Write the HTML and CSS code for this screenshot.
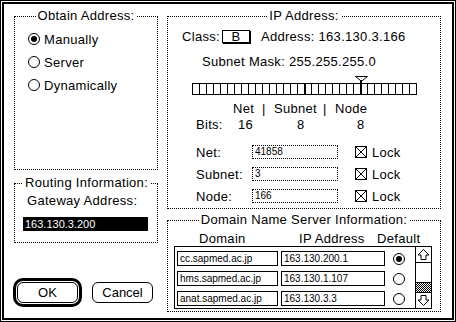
FILE: index.html
```html
<!DOCTYPE html>
<html lang="en">
<head>
	<meta charset="UTF-8">
	<title>MacTCP</title>
	<link rel="stylesheet" href="styles.css">
</head>
<body>
	<div class="dialog">
		<div class="frame">
			<div class="col-left">
				<div class="group obtain">
					<div class="group-title">Obtain Address:</div>
					<div class="radio"><span class="dot on"></span>Manually</div>
					<div class="radio"><span class="dot"></span>Server</div>
					<div class="radio"><span class="dot"></span>Dynamically</div>
				</div>

				<div class="group routing">
					<div class="group-title left">Routing Information:</div>
					<div class="gw-label">Gateway Address:</div>
					<div class="gw-field">163.130.3.200</div>
				</div>

				<div class="buttons">
					<div class="ok-ring"><button class="btn" type="button">OK</button></div>
					<button class="btn cancel" type="button">Cancel</button>
				</div>
			</div>

			<div class="col-right">
				<div class="group ip">
					<div class="group-title">IP Address:</div>
					<div class="class-row">
						<span>Class:</span>
						<span class="class-box">B</span>
						<span class="address">Address: 163.130.3.166</span>
					</div>
					<div class="mask">Subnet Mask: 255.255.255.0</div>

					<svg class="bitbar" width="226" height="20" viewBox="0 0 226 20">
						<rect x="0.5" y="7.5" width="224" height="11" fill="#fff" stroke="#000"/>
						<path d="M7.5 8v10M14.5 8v10M21.5 8v10M28.5 8v10M35.5 8v10M42.5 8v10M49.5 8v10M56.5 8v10M63.5 8v10M70.5 8v10M77.5 8v10M84.5 8v10M91.5 8v10M98.5 8v10M105.5 8v10M119.5 8v10M126.5 8v10M133.5 8v10M140.5 8v10M147.5 8v10M154.5 8v10M161.5 8v10M175.5 8v10M182.5 8v10M189.5 8v10M196.5 8v10M203.5 8v10M210.5 8v10M217.5 8v10" stroke="#000"/>
						<rect x="112" y="8" width="2" height="10" fill="#000"/>
						<rect x="168" y="4" width="2" height="14" fill="#000"/>
						<path d="M163.5 0.5h12l-5 4h-2z" fill="#fff" stroke="#000"/>
					</svg>

					<div class="bit-legend">
						<span class="lg-net">Net</span><span class="lg-bar">|</span><span class="lg-sub">Subnet</span><span class="lg-bar">|</span><span>Node</span>
					</div>
					<div class="bits">
						<span class="b-label">Bits:</span><span class="b-net">16</span><span class="b-sub">8</span><span>8</span>
					</div>

					<div class="field-row first">
						<span class="f-label">Net:</span>
						<span class="field">41858</span>
						<svg class="check" width="12" height="12" viewBox="0 0 12 12"><rect x="0.5" y="0.5" width="11" height="11" fill="#fff" stroke="#000"/><path d="M1 1l10 10M11 1L1 11" stroke="#000"/></svg>
						<span class="lock">Lock</span>
					</div>
					<div class="field-row">
						<span class="f-label">Subnet:</span>
						<span class="field">3</span>
						<svg class="check" width="12" height="12" viewBox="0 0 12 12"><rect x="0.5" y="0.5" width="11" height="11" fill="#fff" stroke="#000"/><path d="M1 1l10 10M11 1L1 11" stroke="#000"/></svg>
						<span class="lock">Lock</span>
					</div>
					<div class="field-row">
						<span class="f-label">Node:</span>
						<span class="field">166</span>
						<svg class="check" width="12" height="12" viewBox="0 0 12 12"><rect x="0.5" y="0.5" width="11" height="11" fill="#fff" stroke="#000"/><path d="M1 1l10 10M11 1L1 11" stroke="#000"/></svg>
						<span class="lock">Lock</span>
					</div>
				</div>

				<div class="group dns">
					<div class="group-title">Domain Name Server Information:</div>
					<div class="dns-head">
						<span class="h-domain">Domain</span><span class="h-ip">IP Address</span><span>Default</span>
					</div>
					<div class="dns-list">
						<div class="dns-rows">
							<div class="dns-row">
								<span class="cell domain">cc.sapmed.ac.jp</span>
								<span class="cell ipaddr">163.130.200.1</span>
								<span class="dot on"></span>
							</div>
							<div class="dns-row">
								<span class="cell domain">hms.sapmed.ac.jp</span>
								<span class="cell ipaddr">163.130.1.107</span>
								<span class="dot"></span>
							</div>
							<div class="dns-row">
								<span class="cell domain">anat.sapmed.ac.jp</span>
								<span class="cell ipaddr">163.130.3.3</span>
								<span class="dot"></span>
							</div>
						</div>
						<div class="scrollbar">
							<div class="arrow up">
								<svg width="15" height="15" viewBox="0 0 15 15"><path d="M7.5 2.5l5.5 5.5h-3v4.5h-5v-4.5h-3z" fill="#fff" stroke="#000"/></svg>
							</div>
							<div class="thumb"></div>
							<div class="track"></div>
							<div class="arrow down">
								<svg width="15" height="15" viewBox="0 0 15 15"><path d="M7.5 12.5l5.5 -5.5h-3v-4.5h-5v4.5h-3z" fill="#fff" stroke="#000"/></svg>
							</div>
						</div>
					</div>
				</div>
			</div>
		</div>
	</div>
</body>
</html>
```

FILE: styles.css
```css
* {
	box-sizing: border-box;
}

body {
	margin: 0;
	background-color: #ffffff;
	color: #000000;
	font-family: "Liberation Sans", Arial, sans-serif;
	font-size: 13px;
	letter-spacing: 0.3px;
}

.dialog {
	width: 456px;
	height: 322px;
	border: 1px solid #000;
	padding: 1px;
}

.frame {
	height: 100%;
	border: 2px solid #000;
	display: flex;
	gap: 9px;
	padding: 12px 0 0 10px;
}

.col-left {
	width: 144px;
}

.col-right {
	width: 274px;
}

.group {
	border: 1px dotted #000;
}

.group-title {
	display: table;
	margin: -9px auto 0;
	padding: 0 2px;
	background-color: #fff;
	line-height: 16px;
}

.group-title.left {
	margin-left: 8px;
}

/* obtain address */
.obtain {
	height: 154px;
}

.radio {
	display: flex;
	align-items: center;
	gap: 4px;
	height: 16px;
	margin: 7px 0 0 13px;
}

.obtain .radio:first-of-type {
	margin-top: 6px;
}

.dot {
	width: 12px;
	height: 12px;
	border: 1px solid #000;
	border-radius: 50%;
	display: flex;
	align-items: center;
	justify-content: center;
	flex: none;
}

.dot.on::after {
	content: "";
	width: 6px;
	height: 6px;
	border-radius: 50%;
	background-color: #000;
}

/* routing */
.routing {
	height: 60px;
	margin-top: 13px;
}

.gw-label {
	line-height: 16px;
	margin: 2px 0 0 12px;
}

.gw-field {
	width: 125px;
	height: 14px;
	margin: 8px 0 0 8px;
	padding-left: 2px;
	background-color: #000;
	color: #fff;
	font-size: 11px;
	line-height: 14px;
	letter-spacing: 0;
}

/* buttons */
.buttons {
	display: flex;
	align-items: flex-start;
	margin: 35px 0 0 -1px;
}

.ok-ring {
	border: 3px solid #000;
	border-radius: 10px;
	padding: 1px;
}

.btn {
	display: block;
	width: 61px;
	height: 21px;
	border: 1px solid #000;
	border-radius: 6px;
	background-color: #fff;
	color: #000;
	font: inherit;
	padding: 0;
}

.btn.cancel {
	margin: 4px 0 0 10px;
}

/* ip address */
.ip {
	height: 193px;
}

.class-row {
	display: flex;
	align-items: center;
	height: 16px;
	margin: 4px 0 0 14px;
}

.class-box {
	width: 28px;
	height: 13px;
	margin-left: 2px;
	border: 1px solid #000;
	box-shadow: 1px 1px 0 #000;
	text-align: center;
	line-height: 11px;
}

.address {
	margin-left: 11px;
}

.mask {
	line-height: 16px;
	margin: 10px 0 0 34px;
}

.bitbar {
	display: block;
	margin: 6px 0 0 24px;
}

.bit-legend {
	display: flex;
	line-height: 16px;
	margin: 5px 0 0 65px;
}

.lg-net {
	width: 29px;
}

.lg-bar {
	width: 12px;
}

.lg-sub {
	width: 49px;
}

.bits {
	display: flex;
	line-height: 16px;
	margin-left: 28px;
}

.b-label {
	width: 42px;
}

.b-net {
	width: 59px;
}

.b-sub {
	width: 60px;
}

.field-row {
	display: flex;
	align-items: center;
	height: 16px;
	margin: 6px 0 0 28px;
}

.field-row.first {
	margin-top: 11px;
}

.f-label {
	width: 56px;
}

.field {
	width: 86px;
	height: 14px;
	border: 1px dotted #000;
	padding-left: 2px;
	font-size: 10px;
	line-height: 12px;
	letter-spacing: 0;
}

.check {
	display: block;
	margin-left: 17px;
}

.lock {
	margin-left: 5px;
}

/* dns */
.dns {
	height: 92px;
	margin-top: 11px;
}

.dns-head {
	display: flex;
	line-height: 14px;
	margin: 4px 0 0 31px;
}

.h-domain {
	width: 100px;
}

.h-ip {
	width: 78px;
}

.dns-list {
	display: flex;
	width: 258px;
	height: 63px;
	margin-left: 6px;
	border: 1px solid #000;
}

.dns-rows {
	flex: 1;
	padding: 4px 0 0 2px;
}

.dns-row {
	display: flex;
	align-items: center;
	height: 15px;
	margin-bottom: 5px;
}

.cell {
	height: 15px;
	border: 1px solid #000;
	padding-left: 2px;
	font-size: 10px;
	line-height: 13px;
	letter-spacing: 0;
}

.domain {
	width: 101px;
}

.ipaddr {
	width: 104px;
	margin-left: 3px;
}

.dns-row .dot {
	margin-left: 8px;
}

.scrollbar {
	width: 16px;
	display: flex;
	flex-direction: column;
	border-left: 1px solid #000;
}

.arrow {
	height: 16px;
}

.arrow svg {
	display: block;
}

.arrow.up {
	border-bottom: 1px solid #000;
}

.arrow.down {
	border-top: 1px solid #000;
}

.thumb {
	height: 20px;
	border-bottom: 1px solid #000;
}

.track {
	flex: 1;
	background: repeating-conic-gradient(#000 0 25%, #fff 0 50%) 0 0 / 2px 2px;
}
```
